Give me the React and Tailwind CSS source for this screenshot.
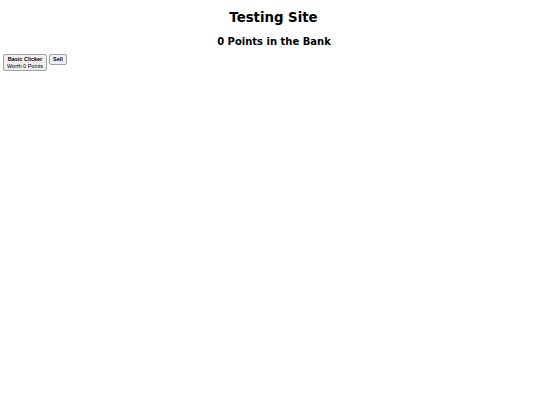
export default function App() {
  return (
    <div className="bg-white min-h-[405px] text-black">
      <h1 className="text-center font-bold text-[13.3px] leading-[16px] pt-[10px] pl-[7px] font-['DejaVu_Sans',sans-serif]">
        Testing Site
      </h1>
      <h2 className="text-center font-bold text-[10px] leading-[13px] mt-[9px] pl-[8px] font-['DejaVu_Sans',sans-serif]">
        0 Points in the Bank
      </h2>
      <div className="flex items-start gap-[2px] ml-[3px] mt-[6px] font-['Liberation_Sans',Arial,sans-serif]">
        <button className="flex flex-col items-center px-[3px] pt-[1px] pb-[1px] border border-[#a0a0a0] rounded-[2px] bg-[#efefef] text-[5.5px] leading-[6.5px]">
          <span className="font-bold">Basic Clicker</span>
          <span>Worth 0 Points</span>
        </button>
        <button className="px-[3px] pt-[1px] pb-[1px] border border-[#a0a0a0] rounded-[2px] bg-[#efefef] text-[5.5px] leading-[6.5px] font-bold">
          Sell
        </button>
      </div>
    </div>
  );
}
